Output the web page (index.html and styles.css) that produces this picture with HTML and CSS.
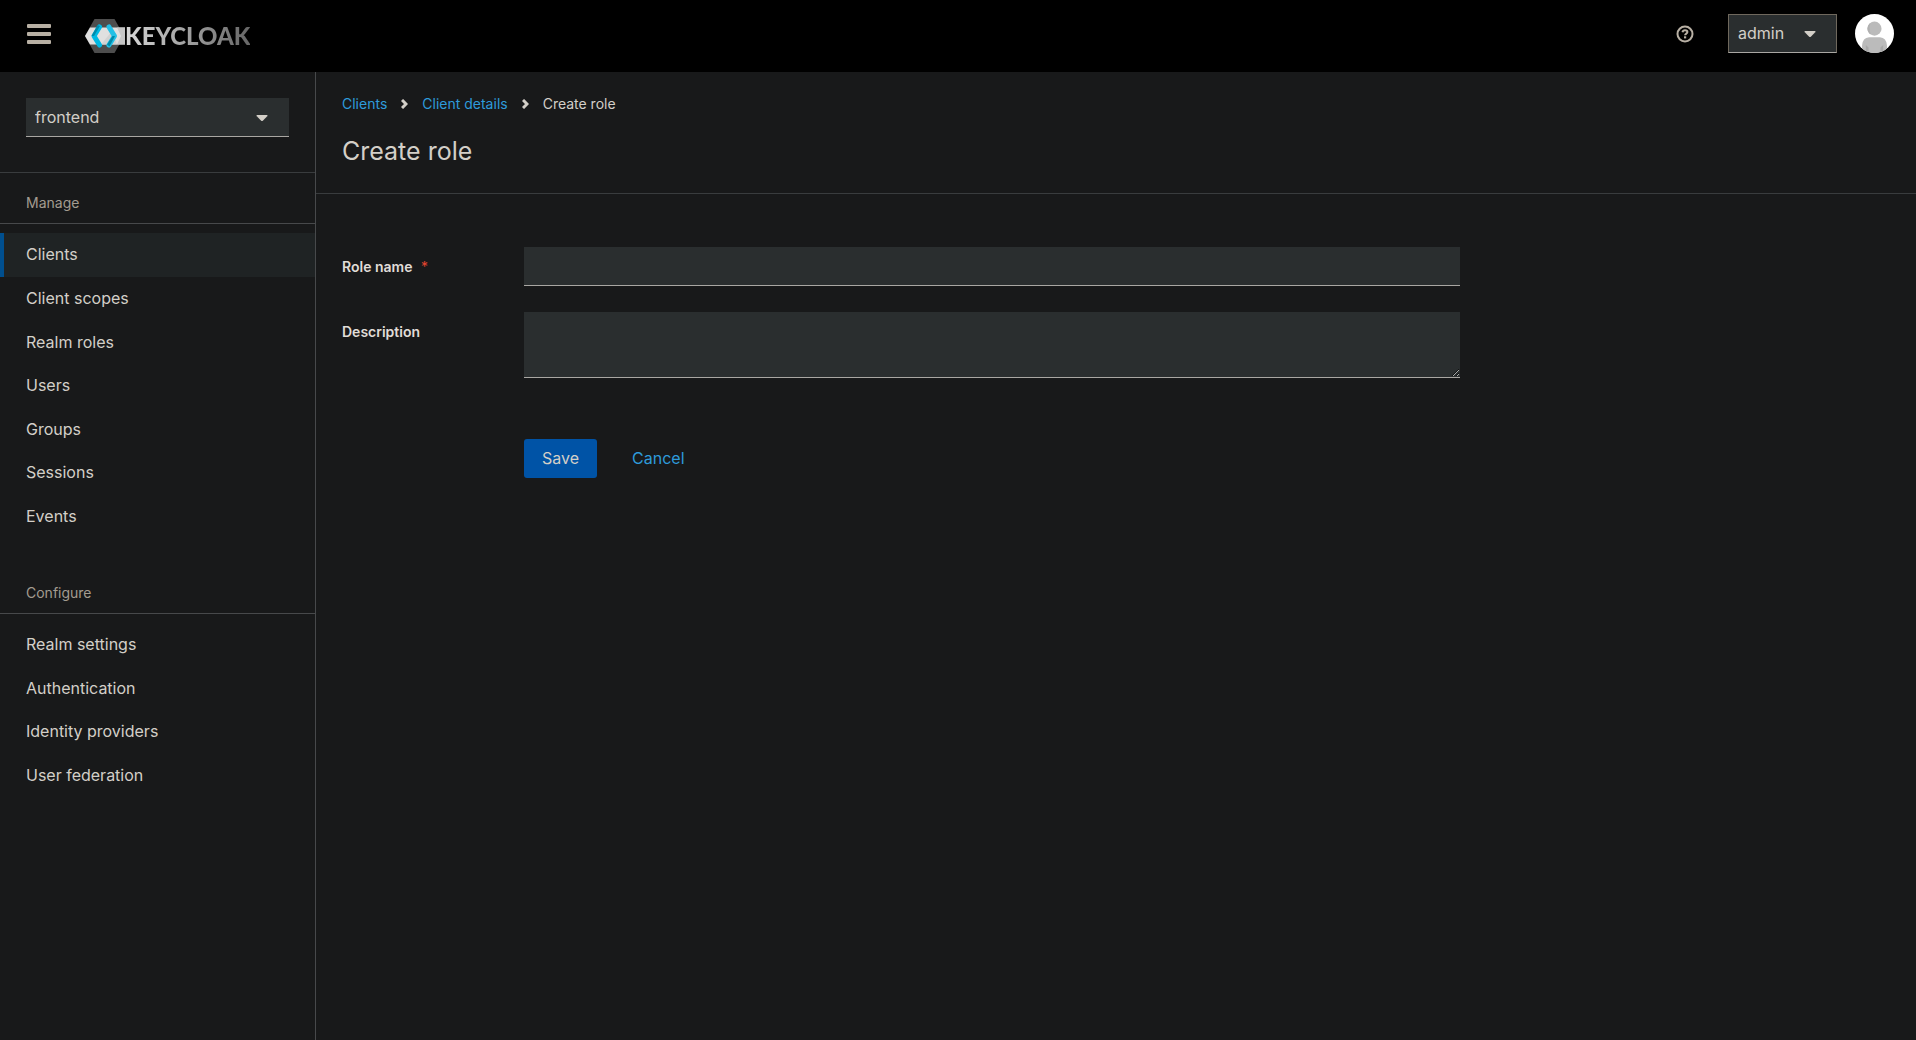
FILE: index.html
```html
<!DOCTYPE html>
<html lang="en">
<head>
    <meta charset="UTF-8">
    <meta name="viewport" content="width=device-width, initial-scale=1.0">
    <title>Create role - Keycloak</title>
    <link rel="stylesheet" href="styles.css">
</head>
<body>
    <header class="masthead">
        <button class="menu-button" type="button" aria-label="Global navigation">
            <svg width="24" height="20" viewBox="0 0 24 20"><rect width="24" height="4" rx="1"/><rect y="8" width="24" height="4" rx="1"/><rect y="16" width="24" height="4" rx="1"/></svg>
        </button>
        <a class="brand" href="#">
            <svg width="40" height="34" viewBox="0 0 40 34">
                <path d="M9.500 0H29.500L39 17L29.500 34H9.500L0 17Z" fill="#4d4d4d"/>
                <path d="M5 8.500H40V25.500H5L0 17Z" fill="#e0e0e0"/>
                <path d="M32 8.500H40V25.500H32L36 17Z" fill="#c6c6c6"/>
                <path d="M27 12L32 25.500H16Z" fill="#d2d2d2"/>
                <g fill="none" stroke-width="5" stroke-linejoin="round" stroke-linecap="round">
                    <path d="M14.500 8L9 17L14.500 26" stroke="#00b8e3"/>
                    <path d="M24 8L29.500 17L24 26" stroke="#22c0e6"/>
                </g>
                <path d="M12.500 6L6.500 17H9L15 7Z" fill="#008aaa"/>
                <path d="M27.500 17H30L24.500 27.500L22 25.500Z" fill="#008aaa"/>
            </svg>
            <span class="brand-name">KEYCLOAK</span>
        </a>
        <div class="masthead-tools">
            <button class="help-button" type="button" aria-label="Help">
                <svg width="18" height="18" viewBox="0 0 18 18" fill="none" stroke="currentColor">
                    <circle cx="9" cy="9" r="7.500" stroke-width="2"/>
                    <path d="M6.500 7.200C6.800 5.900 7.800 5.300 9 5.300C10.300 5.300 11.400 6 11.400 7.100C11.400 8.600 9.100 8.500 9.100 10.200" stroke-width="2"/>
                    <path d="M9.100 11.300V13.400" stroke-width="2.200"/>
                </svg>
            </button>
            <div class="dropdown dropdown-user">
                <select aria-label="User">
                    <option>admin</option>
                </select>
                <svg class="caret" width="12" height="6" viewBox="0 0 12 6"><path d="M1 0H11Q12 .5 11 1.500L6.800 5.700Q6 6.300 5.200 5.700L1 1.500Q0 .5 1 0Z"/></svg>
            </div>
            <svg class="avatar" viewBox="0 0 36 36">
                <circle cx="18" cy="18" r="18" fill="#fff"/>
                <circle cx="18" cy="13.500" r="6.500" fill="#bbb"/>
                <path d="M14.500 8A6.500 6.500 0 0 0 14.500 19Q12.500 13 14.500 8Z" fill="#b0b0b0"/>
                <path d="M6.500 31.800V29Q7 22 13 21.500H23Q29 22 29.500 29V31.800A18 18 0 0 1 6.500 31.800Z" fill="#bbb"/>
                <path d="M12.500 35.100V31L10 28.500V34.100ZM23.500 35.100V31L26 28.500V34.100Z" fill="#a8a8a8"/>
            </svg>
        </div>
    </header>

    <div class="page">
        <nav class="sidebar">
            <div class="realm">
                <div class="dropdown">
                    <select aria-label="Realm">
                        <option>frontend</option>
                    </select>
                    <svg class="caret" width="12" height="6" viewBox="0 0 12 6"><path d="M1 0H11Q12 .5 11 1.500L6.800 5.700Q6 6.300 5.200 5.700L1 1.500Q0 .5 1 0Z"/></svg>
                </div>
            </div>
            <section class="nav-section">
                <h2>Manage</h2>
                <ul>
                    <li><a class="active" href="#">Clients</a></li>
                    <li><a href="#">Client scopes</a></li>
                    <li><a href="#">Realm roles</a></li>
                    <li><a href="#">Users</a></li>
                    <li><a href="#">Groups</a></li>
                    <li><a href="#">Sessions</a></li>
                    <li><a href="#">Events</a></li>
                </ul>
            </section>
            <section class="nav-section">
                <h2>Configure</h2>
                <ul>
                    <li><a href="#">Realm settings</a></li>
                    <li><a href="#">Authentication</a></li>
                    <li><a href="#">Identity providers</a></li>
                    <li><a href="#">User federation</a></li>
                </ul>
            </section>
        </nav>

        <main class="content">
            <div class="page-header">
                <nav class="breadcrumb" aria-label="Breadcrumb">
                    <a href="#">Clients</a>
                    <svg width="7" height="10" viewBox="0 0 7 10"><path d="M1 1L5 5L1 9"/></svg>
                    <a href="#">Client details</a>
                    <svg width="7" height="10" viewBox="0 0 7 10"><path d="M1 1L5 5L1 9"/></svg>
                    <span>Create role</span>
                </nav>
                <h1>Create role</h1>
            </div>
            <form class="role-form">
                <label for="roleName">Role name <span class="required">*</span></label>
                <input type="text" id="roleName" name="name" required>
                <label for="description">Description</label>
                <textarea id="description" name="description"></textarea>
                <div class="actions">
                    <button class="save-button" type="submit">Save</button>
                    <a class="cancel-link" href="#">Cancel</a>
                </div>
            </form>
        </main>
    </div>
</body>
</html>
```

FILE: styles.css
```css
* {
    box-sizing: border-box;
}
body {
    margin: 0;
    min-height: 100vh;
    display: flex;
    flex-direction: column;
    background-color: #18191a;
    color: #d3cfc8;
    font-family: Inter, 'Liberation Sans', sans-serif;
    font-size: 16px;
    line-height: 1.6;
}
a {
    color: #2e9bdb;
    text-decoration: none;
}
button,
select,
input,
textarea {
    font: inherit;
    color: inherit;
}
.masthead {
    height: 72px;
    padding: 0 22px 5px 27px;
    display: flex;
    align-items: center;
    background-color: #000;
}
.menu-button,
.help-button {
    display: flex;
    padding: 0;
    border: none;
    background: none;
    color: #b8b0a4;
    cursor: pointer;
}
.menu-button svg {
    fill: currentColor;
}
.brand {
    display: flex;
    align-items: center;
    margin-left: 34px;
    padding-top: 4px;
}
.brand-name {
    font-family: Lato, sans-serif;
    font-size: 24px;
    font-weight: 900;
    line-height: 34px;
    background: linear-gradient(to right, #d8d8d8, #a0a0a0 50%, #666);
    -webkit-background-clip: text;
    background-clip: text;
    color: transparent;
}
.masthead-tools {
    display: flex;
    align-items: center;
    margin-left: auto;
}
.dropdown {
    position: relative;
}
.dropdown select {
    display: block;
    width: 100%;
    height: 39px;
    padding: 1px 9px 0;
    border: none;
    border-bottom: 1px solid #a9a7a3;
    border-radius: 0;
    background-color: #2a2e2f;
    appearance: none;
}
.caret {
    position: absolute;
    top: 17px;
    right: 21px;
    fill: #d3cfc8;
    pointer-events: none;
}
.dropdown-user {
    width: 109px;
    margin: 0 18px 0 34px;
}
.dropdown-user select {
    border: 1px solid #6f685d;
    border-bottom-color: #a9a7a3;
}
.avatar {
    width: 39px;
    height: 39px;
}
.page {
    flex: 1;
    display: flex;
}
.sidebar {
    width: 316px;
    border-right: 1px solid #47494b;
}
.realm {
    padding: 26px 26px 35px;
    border-bottom: 1px solid #393c3e;
}
.nav-section {
    margin-bottom: 24px;
}
.nav-section h2 {
    margin: 0;
    padding: 19px 26px 9px;
    border-bottom: 1px solid #47494b;
    color: #a39c90;
    font-size: 14px;
    font-weight: 400;
}
.nav-section ul {
    margin: 0;
    padding: 9px 0 0;
    list-style: none;
}
.nav-section a {
    display: block;
    padding: 9px 26px;
    color: #d3cfc8;
}
.nav-section a.active {
    background: linear-gradient(to right, #004f8f 4px, #1f2324 4px);
}
.content {
    flex: 1;
}
.page-header {
    padding: 21px 26px 24px;
    border-bottom: 1px solid #393c3e;
}
.breadcrumb {
    display: flex;
    align-items: center;
    gap: 14px;
    font-size: 14px;
}
.breadcrumb svg {
    fill: none;
    stroke: #d3cfc8;
    stroke-width: 3;
}
.page-header h1 {
    margin: 18px 0 0;
    font-size: 25px;
    font-weight: 400;
    line-height: 36px;
}
.role-form {
    display: grid;
    grid-template-columns: 182px 1fr;
    row-gap: 26px;
    max-width: 1170px;
    padding: 53px 26px;
}
.role-form label {
    padding-top: 9px;
    color: #e0ddd8;
    font-size: 14px;
    font-weight: 600;
}
.required {
    margin-left: 5px;
    color: #e5452f;
    font-weight: 400;
}
.role-form input,
.role-form textarea {
    display: block;
    width: 100%;
    height: 39px;
    padding: 0 9px;
    border: none;
    border-bottom: 1px solid #a9a7a3;
    border-radius: 0;
    background-color: #2a2e2f;
}
.role-form textarea {
    height: 66px;
    padding: 6px 9px;
    resize: vertical;
}
.actions {
    grid-column: 2;
    display: flex;
    gap: 35px;
    padding-top: 35px;
}
.save-button {
    height: 39px;
    padding: 0 18px;
    border: none;
    border-radius: 3px;
    background-color: #0053a6;
    cursor: pointer;
}
.cancel-link {
    line-height: 38px;
}
```
